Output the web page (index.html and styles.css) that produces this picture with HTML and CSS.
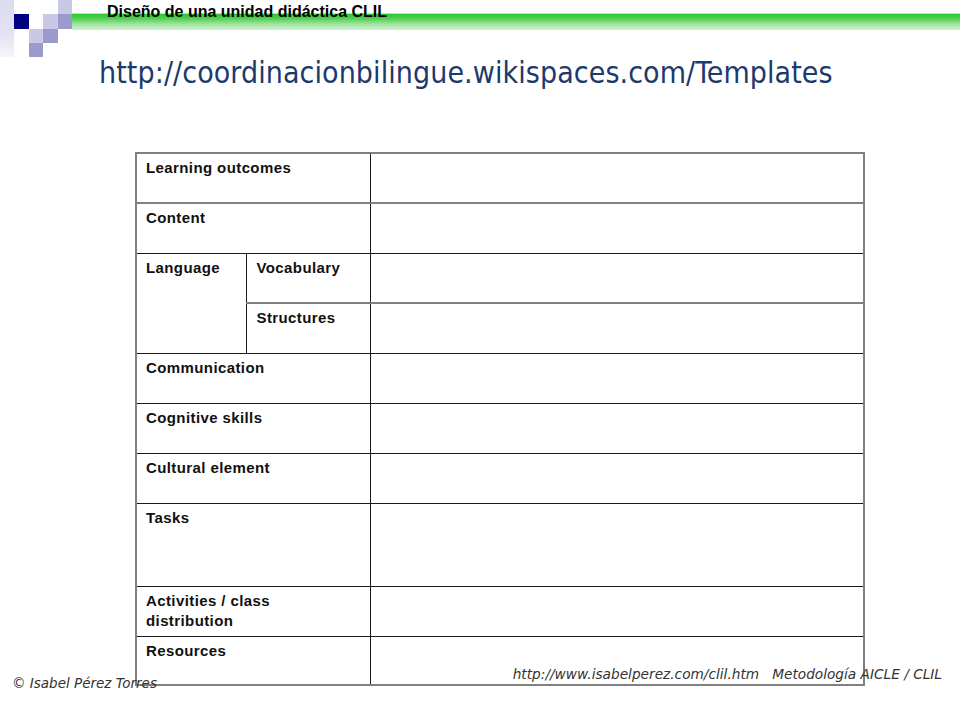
FILE: index.html
```html
<!DOCTYPE html>
<html lang="es">
<head>
<meta charset="utf-8">
<title>Diseño de una unidad didáctica CLIL</title>
<link rel="stylesheet" href="styles.css">
</head>
<body>
<div class="slide">
  <header class="top">
    <div class="logo">
      <span class="sq fade"></span>
      <span class="sq light c5 r1"></span>
      <span class="sq dark c2 r2"></span>
      <span class="sq light c4 r2"></span>
      <span class="sq mid c5 r2"></span>
      <span class="sq light c3 r3"></span>
      <span class="sq mid c4 r3"></span>
      <span class="sq mid c3 r4"></span>
    </div>
    <div class="band"><span class="deck">Diseño de una unidad didáctica CLIL</span></div>
  </header>

  <h1 class="url">http://coordinacionbilingue.wikispaces.com/Templates</h1>

  <table class="grid">
    <colgroup>
      <col class="col-a"><col class="col-b"><col class="col-c">
    </colgroup>
    <tr class="row gray-bottom"><th colspan="2">Learning outcomes</th><td></td></tr>
    <tr class="row"><th colspan="2">Content</th><td></td></tr>
    <tr class="row gray-bottom"><th rowspan="2" class="lang">Language</th><th class="sub">Vocabulary</th><td></td></tr>
    <tr class="row"><th class="sub">Structures</th><td></td></tr>
    <tr class="row"><th colspan="2">Communication</th><td></td></tr>
    <tr class="row"><th colspan="2">Cognitive skills</th><td></td></tr>
    <tr class="row"><th colspan="2">Cultural element</th><td></td></tr>
    <tr class="row tall"><th colspan="2">Tasks</th><td></td></tr>
    <tr class="row"><th colspan="2">Activities / class distribution</th><td></td></tr>
    <tr class="row last"><th colspan="2">Resources</th><td></td></tr>
  </table>

  <footer class="foot">
    <span class="author">© Isabel Pérez Torres</span>
    <span class="source">http://www.isabelperez.com/clil.htm&nbsp;&nbsp;&nbsp;Metodología AICLE / CLIL</span>
  </footer>
</div>
</body>
</html>
```

FILE: styles.css
```css
html, body {
  margin: 0;
  padding: 0;
  background: #ffffff;
}

.slide {
  position: relative;
  width: 960px;
  height: 720px;
  overflow: hidden;
  font-family: "Liberation Sans", Arial, sans-serif;
}

.top {
  display: flex;
  align-items: flex-start;
  height: 57px;
}

.logo {
  display: grid;
  grid-template-columns: repeat(5, 14.4px);
  grid-template-rows: repeat(4, 14.3px);
  width: 72px;
  flex: none;
}

.sq { display: block; }
.fade {
  grid-column: 1;
  grid-row: 1 / span 4;
  background: linear-gradient(to bottom, #dcdcf0 0%, #e2e2f3 60%, #f6f6fb 100%);
}
.light { background: #c9c9e6; }
.mid { background: #9a9acd; }
.dark { background: #000080; }
.c2 { grid-column: 2; }
.c3 { grid-column: 3; }
.c4 { grid-column: 4; }
.c5 { grid-column: 5; }
.r1 { grid-row: 1; }
.r2 { grid-row: 2; }
.r3 { grid-row: 3; }
.r4 { grid-row: 4; }

.band {
  flex: 1;
  height: 30px;
  background: linear-gradient(to bottom,
    rgba(255,255,255,0) 0,
    rgba(255,255,255,0) 13px,
    #e9f8e9 13px,
    #30c830 14.5px,
    #48cf48 18px,
    #9fe29f 24px,
    #d6f2d6 30px);
  padding-left: 35px;
  box-sizing: border-box;
}

.deck {
  display: block;
  font-weight: bold;
  font-size: 16px;
  line-height: 18px;
  padding-top: 3px;
  color: #000000;
}

.url {
  margin: -2px 0 0 99px;
  font-family: "DejaVu Sans Condensed", "DejaVu Sans", sans-serif;
  font-stretch: condensed;
  font-weight: normal;
  font-size: 30px;
  letter-spacing: 0.08px;
  line-height: 36px;
  color: #1c3a6c;
  height: 97px;
}

.grid {
  margin-left: 135px;
  border-collapse: collapse;
  table-layout: fixed;
  width: 730px;
  border: 2px solid #808080;
}

.col-a { width: 110px; }
.col-b { width: 124px; }
.col-c { width: auto; }

.row { height: 50px; }
.row.tall { height: 83px; }
.row.last { height: 49px; }

.grid th,
.grid td {
  border: 1px solid #1a1a1a;
  padding: 4px 20px 0 9px;
  vertical-align: top;
  text-align: left;
  font-weight: bold;
  font-size: 15px;
  letter-spacing: 0.4px;
  line-height: 20px;
  color: #111111;
}

.grid th.sub { padding-left: 10px; }

.grid tr.gray-bottom > th,
.grid tr.gray-bottom > td {
  border-bottom: 2px solid #808080;
}
.grid tr.gray-bottom > th.lang { border-bottom: 1px solid #1a1a1a; }

.grid tr > td { border-right: 2px solid #808080; }
.grid tr.last > th,
.grid tr.last > td { border-bottom: 1px solid #111111; }

.foot {
  position: absolute;
  left: 0;
  right: 0;
  top: 666px;
  font-family: "DejaVu Sans", sans-serif;
  font-style: italic;
  font-size: 13.5px;
  color: #333333;
}

.author {
  position: absolute;
  left: 12px;
  top: 9px;
}

.source {
  position: absolute;
  right: 18px;
  top: 0;
  font-size: 13.7px;
}
```
